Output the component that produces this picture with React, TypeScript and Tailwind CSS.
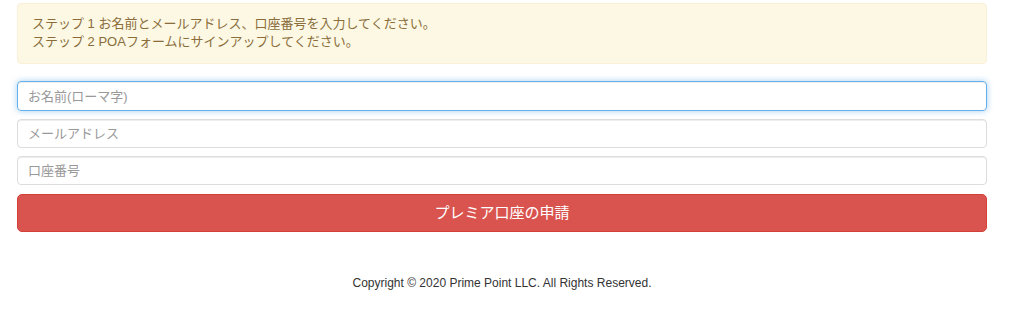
export default function App() {
  return (
    <div className="w-[1024px] h-[321px] bg-white font-['Liberation_Sans','Noto_Sans_CJK_JP',sans-serif]">
      <div className="mx-[17px] pt-[3px] w-[970px]">
        <div className="bg-[#fcf8e3] border border-[#faf0d8] rounded-[4px] text-[#8a6d3b] text-[13px] leading-[18px] px-[14px] pt-[11px] pb-[11px] h-[61px]">
          <p>ステップ 1 お名前とメールアドレス、口座番号を入力してください。</p>
          <p>ステップ 2 POAフォームにサインアップしてください。</p>
        </div>
        <form className="mt-[17px] flex flex-col gap-[8px]">
          <input
            type="text"
            placeholder="お名前(ローマ字)"
            className="h-[30px] w-full rounded-[4px] border border-[#66afe9] px-[10px] text-[13px] text-[#555] placeholder:text-[#999] outline-none font-['Liberation_Sans','Noto_Sans_CJK_JP',sans-serif] shadow-[inset_0_1px_1px_rgba(0,0,0,0.075),0_0_6px_rgba(102,175,233,0.6)]"
          />
          <input
            type="text"
            placeholder="メールアドレス"
            className="h-[29px] w-full rounded-[4px] border border-[#ddd] px-[10px] text-[13px] text-[#555] placeholder:text-[#999] outline-none font-['Liberation_Sans','Noto_Sans_CJK_JP',sans-serif] shadow-[inset_0_1px_1px_rgba(0,0,0,0.075)]"
          />
          <input
            type="text"
            placeholder="口座番号"
            className="h-[29px] w-full rounded-[4px] border border-[#ddd] px-[10px] text-[13px] text-[#555] placeholder:text-[#999] outline-none font-['Liberation_Sans','Noto_Sans_CJK_JP',sans-serif] shadow-[inset_0_1px_1px_rgba(0,0,0,0.075)]"
          />
          <button
            type="button"
            className="mt-[1px] h-[38px] w-full rounded-[5px] bg-[#d9534f] border border-[#d43f3a] text-white text-[15px] font-['Liberation_Sans','Noto_Sans_CJK_JP',sans-serif]"
          >
            プレミア口座の申請
          </button>
        </form>
        <footer className="mt-[42px] text-center text-[12px] text-[#333]">
          Copyright © 2020 Prime Point LLC. All Rights Reserved.
        </footer>
      </div>
    </div>
  );
}
